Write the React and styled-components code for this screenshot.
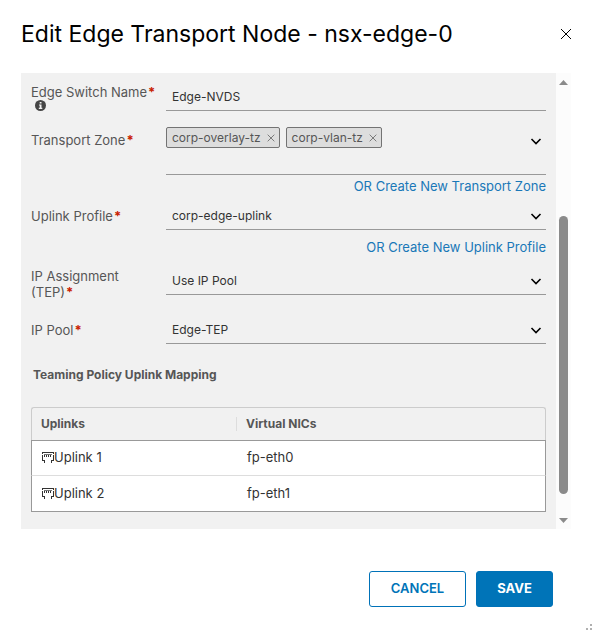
import React from "react";
import styled, { createGlobalStyle, css } from "styled-components";

const GlobalStyle = createGlobalStyle`
  *, *::before, *::after { box-sizing: border-box; }
  body {
    margin: 0;
    background: #fff;
    color: #333;
    font-family: Inter, "Open Sans", sans-serif;
    font-size: 13px;
    line-height: 14px;
  }
  button, input, select { font: inherit; color: inherit; }
`;

const Dialog = styled.main`
  position: relative;
  display: flex;
  flex-direction: column;
  min-height: 100vh;
  padding: 20px 18px 26px 21px;
`;

const Header = styled.header`
  display: flex;
  align-items: center;
  justify-content: space-between;
  height: 28px;
`;

const Title = styled.h1`
  margin: 0;
  color: #000;
  font-size: 23px;
  line-height: 28px;
  font-weight: 400;
  white-space: nowrap;
`;

const IconButton = styled.button`
  display: flex;
  align-items: center;
  justify-content: center;
  width: ${(p) => p.$size}px;
  height: ${(p) => p.$size}px;
  padding: 0;
  border: 0;
  background: none;
  color: ${(p) => p.$color || "#000"};
  cursor: pointer;
`;

const ScrollArea = styled.div`
  display: flex;
  margin: 25px 3px 0 0;
`;

const Panel = styled.form`
  flex: 1;
  min-width: 0;
  padding: 0 10px 17px;
  background: #f1f1f1;
`;

const Track = styled.div`
  display: flex;
  flex-direction: column;
  align-items: center;
  width: 15px;
  background: #fcfcfc;
`;

const TrackArrow = styled.div`
  display: flex;
  align-items: center;
  justify-content: center;
  height: 18px;
  color: #8b8b8b;
`;

const TrackSpace = styled.div`
  flex: ${(p) => p.$grow};
`;

const Thumb = styled.div`
  flex: 278;
  width: 9px;
  border-radius: 5px;
  background: #8b8b8b;
`;

const Row = styled.div`
  display: grid;
  grid-template-columns: 135px 1fr;
  align-items: start;
  margin-top: ${(p) => p.$gap || 0}px;
`;

const Label = styled.label`
  padding: ${(p) => p.$top}px 6px 0 0;
  color: #565656;
  font-size: 13px;
  line-height: 16px;
`;

const LabelLine = styled.span`
  display: block;
`;

const Required = styled.span`
  margin-left: 1px;
  color: #c92100;
  font-weight: 700;
`;

const InfoIcon = styled.svg`
  display: block;
  margin: 0 0 0 4px;
`;

const control = css`
  width: 100%;
  border: 0;
  border-bottom: 1px solid #999;
  border-radius: 0;
  background: transparent;
  font-size: 12px;
  outline: none;
`;

const TextInput = styled.input`
  ${control}
  height: 38px;
  padding: 10px 6px 0;
`;

const SelectWrap = styled.div`
  display: grid;
  align-items: center;

  & > * { grid-area: 1 / 1; }
  & > svg { justify-self: end; margin-right: 4px; pointer-events: none; }
`;

const Select = styled.select`
  ${control}
  appearance: none;
  height: 29px;
  padding: 1px 24px 0 6px;
  line-height: 20px;
`;

const Combo = styled.div`
  display: flex;
  align-items: flex-start;
  justify-content: space-between;
  height: 48px;
  border-bottom: 1px solid #999;
`;

const ComboBody = styled.div`
  display: flex;
  flex: 1;
  flex-wrap: wrap;
  gap: 6px;
  min-width: 0;
`;

const ComboInput = styled.input`
  width: 100%;
  height: 18px;
  padding: 0 6px;
  border: 0;
  background: transparent;
  outline: none;
`;

const ComboToggle = styled.div`
  padding-top: 4px;
`;

const Chip = styled.span`
  display: flex;
  align-items: center;
  gap: 3px;
  height: 21px;
  padding: 0 1px 0 5px;
  border: 1px solid #737373;
  border-radius: 2px;
  background: #ddd;
  color: #565656;
  font-size: 12px;
`;

const LinkRow = styled.div`
  display: flex;
  justify-content: flex-end;
  padding-top: ${(p) => p.$top}px;
`;

const Link = styled.a`
  color: #1a78b8;
  font-size: 13px;
  line-height: 14px;
  text-decoration: none;
`;

const SectionTitle = styled.h2`
  margin: 24px 2px 25px;
  color: #565656;
  font-size: 12px;
  line-height: 14px;
  font-weight: 700;
`;

const Table = styled.table`
  width: 100%;
  border-spacing: 0;
  table-layout: fixed;
`;

const HeadCell = styled.th`
  width: ${(p) => p.$width || "auto"};
  height: 33px;
  padding: 0;
  border-top: 1px solid #ccc;
  color: #565656;
  font-size: 12px;
  text-align: left;

  &:first-child { border-left: 1px solid #ccc; border-top-left-radius: 3px; }
  &:last-child { border-right: 1px solid #ccc; border-top-right-radius: 3px; }
`;

const HeadText = styled.div`
  padding-left: 9px;
  border-left: ${(p) => (p.$divided ? "1px solid #ddd" : "0")};
`;

const Cell = styled.td`
  height: 36px;
  padding: 0 10px 2px 11px;
  border-bottom: 1px solid #ddd;
  background: #fff;
  color: #333;
  font-size: 13px;

  &:first-child { border-left: 1px solid #999; padding-left: 10px; }
  &:last-child { border-right: 1px solid #999; }
  tr:first-child > & { border-top: 1px solid #999; }
  tr:last-child > & { border-bottom-color: #999; }
`;

const PortName = styled.span`
  display: flex;
  align-items: center;
`;

const Footer = styled.footer`
  display: flex;
  justify-content: flex-end;
  gap: 10px;
  margin-top: 42px;
  padding-right: 21px;
`;

const ActionButton = styled.button`
  min-width: ${(p) => (p.$primary ? 77 : 97)}px;
  height: 36px;
  padding: 0 12px 2px;
  border: 1px solid #0072b8;
  border-radius: 3px;
  background: ${(p) => (p.$primary ? "#0074b8" : "#fff")};
  color: ${(p) => (p.$primary ? "#fff" : "#0074b8")};
  font-size: 13px;
  font-weight: ${(p) => (p.$primary ? 700 : 600)};
  cursor: pointer;
`;

const Grip = styled.svg`
  position: absolute;
  right: 0;
  bottom: 0;
`;

function Cross({ size, width = 1 }) {
  return (
    <svg width={size} height={size} viewBox="0 0 12 12" fill="none" stroke="currentColor" strokeWidth={width} aria-hidden="true">
      <path d="M1 1l10 10M11 1L1 11" />
    </svg>
  );
}

function Chevron() {
  return (
    <svg width="12" height="12" viewBox="0 0 12 12" fill="none" stroke="#000" strokeWidth="1.6" aria-hidden="true">
      <path d="M1.5 4L6 8.5 10.5 4" />
    </svg>
  );
}

function PortIcon() {
  return (
    <svg width="12" height="12" viewBox="0 0 12 12" fill="none" stroke="#333" shapeRendering="crispEdges" aria-hidden="true">
      <path d="M0 1.5h12M0.5 1v2M0.5 4v5M11.5 1v2M11.5 4v5M0 9.5h3M9 9.5h3M2.5 10v2M9.5 10v2" />
      <path d="M2.5 3v3M4.5 3v3M6.5 3v3M8.5 3v3" />
      <path d="M2 3.5h8" stroke="#777" />
    </svg>
  );
}

function SelectRow({ id, gap, top, lines, options }) {
  return (
    <Row $gap={gap}>
      <Label htmlFor={id} $top={top}>
        {lines.map((line, i) => (
          <LabelLine key={line}>
            {line}
            {i === lines.length - 1 && <Required>*</Required>}
          </LabelLine>
        ))}
      </Label>
      <SelectWrap>
        <Select id={id}>
          {options.map((o) => (
            <option key={o}>{o}</option>
          ))}
        </Select>
        <Chevron />
      </SelectWrap>
    </Row>
  );
}

const zones = ["corp-overlay-tz", "corp-vlan-tz"];
const uplinks = [
  ["Uplink 1", "fp-eth0"],
  ["Uplink 2", "fp-eth1"],
];

export default function App() {
  return (
    <>
      <GlobalStyle />
      <Dialog>
        <Header>
          <Title>Edit Edge Transport Node - nsx-edge-0</Title>
          <IconButton type="button" $size={16} aria-label="Close">
            <Cross size={12} />
          </IconButton>
        </Header>

        <ScrollArea>
          <Panel id="edge-form">
            <Row>
              <Label htmlFor="switch-name" $top={11}>
                Edge Switch Name
                <Required>*</Required>
                <InfoIcon width="11" height="11" viewBox="0 0 11 11" aria-hidden="true">
                  <circle cx="5.5" cy="5.5" r="5.5" fill="#454545" />
                  <path d="M4.7 2h1.8v1.5H4.7zM4 4.5h2.5v3.3h.8V9H3.8V7.8h.9V5.6H4z" fill="#f1f1f1" />
                </InfoIcon>
              </Label>
              <TextInput id="switch-name" type="text" defaultValue="Edge-NVDS" />
            </Row>

            <Row $gap={16}>
              <Label htmlFor="transport-zone" $top={5}>
                Transport Zone
                <Required>*</Required>
              </Label>
              <Combo>
                <ComboBody>
                  {zones.map((z) => (
                    <Chip key={z}>
                      {z}
                      <IconButton type="button" $size={14} $color="#737373" aria-label={`Remove ${z}`}>
                        <Cross size={8} width={1.4} />
                      </IconButton>
                    </Chip>
                  ))}
                  <ComboInput id="transport-zone" type="text" />
                </ComboBody>
                <ComboToggle>
                  <IconButton type="button" $size={20} aria-label="Show transport zones">
                    <Chevron />
                  </IconButton>
                </ComboToggle>
              </Combo>
            </Row>
            <LinkRow $top={4}>
              <Link href="#transport-zone">OR Create New Transport Zone</Link>
            </LinkRow>

            <SelectRow id="uplink-profile" gap={8} top={7} lines={["Uplink Profile"]} options={["corp-edge-uplink"]} />
            <LinkRow $top={10}>
              <Link href="#uplink-profile">OR Create New Uplink Profile</Link>
            </LinkRow>

            <SelectRow id="ip-assignment" gap={12} top={2} lines={["IP Assignment", "(TEP)"]} options={["Use IP Pool"]} />
            <SelectRow id="ip-pool" gap={15} top={7} lines={["IP Pool"]} options={["Edge-TEP"]} />

            <SectionTitle>Teaming Policy Uplink Mapping</SectionTitle>

            <Table>
              <thead>
                <tr>
                  <HeadCell scope="col" $width="205px">
                    <HeadText>Uplinks</HeadText>
                  </HeadCell>
                  <HeadCell scope="col">
                    <HeadText $divided>Virtual NICs</HeadText>
                  </HeadCell>
                </tr>
              </thead>
              <tbody>
                {uplinks.map(([name, nic]) => (
                  <tr key={name}>
                    <Cell>
                      <PortName>
                        <PortIcon />
                        {name}
                      </PortName>
                    </Cell>
                    <Cell>{nic}</Cell>
                  </tr>
                ))}
              </tbody>
            </Table>
          </Panel>

          <Track aria-hidden="true">
            <TrackArrow>
              <svg width="9" height="5" viewBox="0 0 9 5">
                <path d="M0 5L4.5 0 9 5z" fill="currentColor" />
              </svg>
            </TrackArrow>
            <TrackSpace $grow={125} />
            <Thumb />
            <TrackSpace $grow={17} />
            <TrackArrow>
              <svg width="9" height="5" viewBox="0 0 9 5">
                <path d="M0 0L4.5 5 9 0z" fill="currentColor" />
              </svg>
            </TrackArrow>
          </Track>
        </ScrollArea>

        <Footer>
          <ActionButton type="button">CANCEL</ActionButton>
          <ActionButton type="submit" form="edge-form" $primary>
            SAVE
          </ActionButton>
        </Footer>

        <Grip width="6" height="9" viewBox="0 0 6 9" fill="#b0b0b0" aria-hidden="true">
          <path d="M0 4h2v2H0zM4 0h2v2H4zM4 4h2v2H4z" />
        </Grip>
      </Dialog>
    </>
  );
}
